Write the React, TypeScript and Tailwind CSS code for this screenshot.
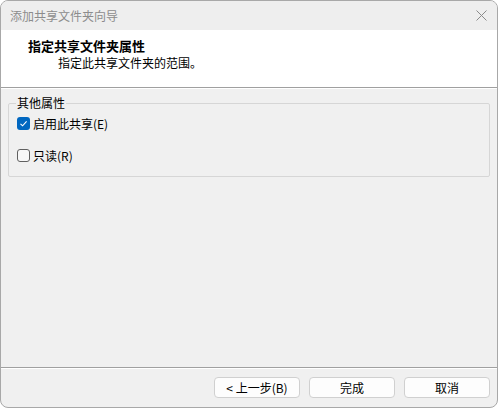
import React from "react";

const font = { fontFamily: '"Noto Sans CJK SC", "Noto Sans", sans-serif' };

const Check = ({ checked, label }: { checked: boolean; label: string }) => (
  <div className="flex items-center h-[16px]">
    {checked ? (
      <span className="w-[13px] h-[13px] rounded-[3px] bg-[#0067c0] flex items-center justify-center">
        <svg width="9" height="9" viewBox="0 0 9 9" fill="none">
          <path d="M1.5 4.8 L3.6 6.8 L7.6 2.4" stroke="white" strokeWidth="1.1" />
        </svg>
      </span>
    ) : (
      <span className="w-[13px] h-[13px] rounded-[3px] border border-[#606060] bg-[#f7f7f7]" />
    )}
    <span className="ml-[3px] text-[12px] leading-[16px] text-black mt-[2px]">{label}</span>
  </div>
);

const Btn = ({ children }: { children: React.ReactNode }) => (
  <button className="w-[86px] h-[21px] rounded-[4px] border border-[#d0d0d0] bg-[#fdfdfd] text-[12px] leading-none text-black flex items-center justify-center">
    {children}
  </button>
);

export default function App() {
  return (
    <div className="w-[499px] h-[408px] bg-white" style={font}>
      <div className="w-[498px] h-[408px] border border-[#a8a8a8] rounded-lg bg-[#f0f0f0] flex flex-col overflow-hidden">
        {/* title bar */}
        <div className="h-[29px] flex items-center justify-between pl-[9px] pr-[10px] bg-[#eeeeee]">
          <span className="text-[12px] leading-none text-[#8c8c8c]">添加共享文件夹向导</span>
          <svg width="11" height="11" viewBox="0 0 11 11">
            <path d="M0.5 0.5 L10.5 10.5 M10.5 0.5 L0.5 10.5" stroke="#8a8a8a" strokeWidth="1" />
          </svg>
        </div>

        {/* header */}
        <div className="h-[58px] bg-white border-b border-[#a0a0a0] pt-[8px]">
          <div className="pl-[27px] text-[13px] leading-[16px] font-bold text-black">指定共享文件夹属性</div>
          <div className="pl-[57px] text-[12px] leading-[18px] text-black">指定此共享文件夹的范围。</div>
        </div>

        {/* body */}
        <div className="flex-1 border-t border-white px-[7px] pt-[7px]">
          <fieldset className="h-[81px] border border-[#d6d6d6] rounded-[2px] pl-[8px] pr-2 m-0">
            <legend className="text-[12px] leading-[14px] text-black px-[1px] -ml-[1px]">其他属性</legend>
            <div className="mt-[5px] flex flex-col gap-[16px]">
              <Check checked label="启用此共享(E)" />
              <Check checked={false} label="只读(R)" />
            </div>
          </fieldset>
        </div>

        {/* footer */}
        <div className="h-[40px] border-t border-[#a0a0a0]">
          <div className="border-t border-white h-full flex justify-end gap-[9px] pt-[8px] pr-[7px]">
            <Btn>&lt; 上一步(B)</Btn>
            <Btn>完成</Btn>
            <Btn>取消</Btn>
          </div>
        </div>
      </div>
    </div>
  );
}
